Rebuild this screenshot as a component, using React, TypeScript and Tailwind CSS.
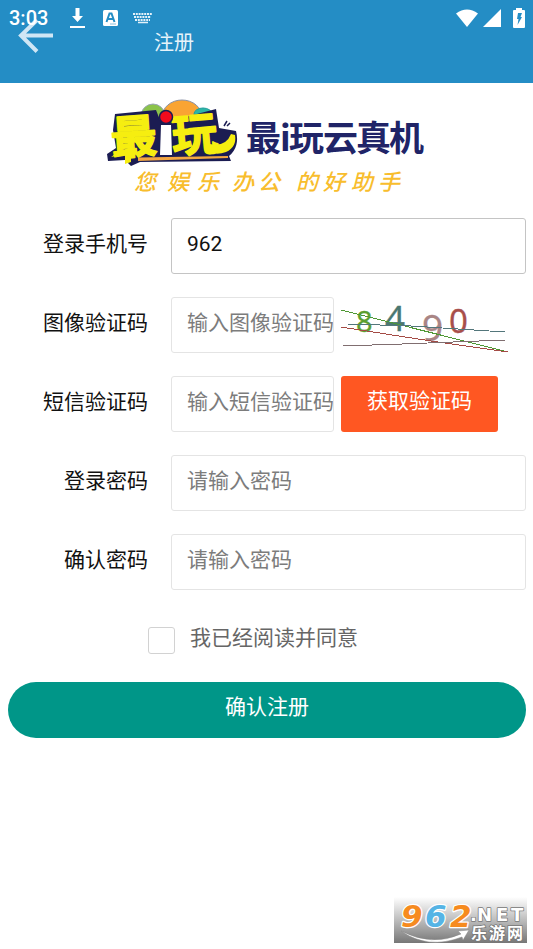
import type { ReactNode } from "react";

const inputClass =
  "h-14 min-w-0 rounded-[3px] border bg-white pl-[15px] pb-1 text-[21px] text-[#111] placeholder:text-[#7c7c7c] outline-none";

function StatusBar() {
  return (
    <div className="absolute inset-x-0 top-0 flex h-9 items-center pl-[9px] pr-2 text-white">
      <span className="w-[60px] font-[Roboto] text-[20px] font-medium leading-9">3:03</span>
      <svg className="h-[22px] w-[17px]" viewBox="0 0 17 22" fill="currentColor" aria-hidden="true">
        <path d="M6.500 1h4v8H14l-5.500 6L3 9h3.500zM1 19h15v2H1z" />
      </svg>
      <svg className="ml-4 h-4 w-4" viewBox="0 0 16 16" aria-hidden="true">
        <rect x="1" y="0" width="15" height="16" rx="1.500" fill="#fff" />
        <path d="M4.500 12L7.500 3.500h2L12.500 12M6 9h5" fill="none" stroke="#248dc5" strokeWidth="2" />
        <path d="M8 14h6" stroke="#8cc1df" />
      </svg>
      <svg className="ml-[15px] h-3 w-[19px]" viewBox="0 0 19 12" aria-hidden="true">
        <g stroke="#e4f1f9" strokeWidth="2" strokeDasharray="2 .8" fill="none">
          <path d="M0 2h19M1 5h17M2 8h15" />
          <path d="M5 10.500h10" strokeDasharray="none" strokeWidth="1.500" />
        </g>
      </svg>
      <div className="ml-auto flex items-center">
        <svg className="h-[19px] w-6" viewBox="0 0 24 19" fill="currentColor" aria-hidden="true">
          <path d="M1 4.500Q12-3.500 23 4.500L12 18z" />
        </svg>
        <svg className="ml-1 h-[19px] w-[18px]" viewBox="0 0 18 19" fill="currentColor" aria-hidden="true">
          <path d="M18 0v18H0z" />
        </svg>
        <svg className="ml-3 h-5 w-3" viewBox="0 0 12 20" aria-hidden="true">
          <path d="M3 0h6v2h2q1 0 1 1v16q0 1-1 1H1q-1 0-1-1V3q0-1 1-1h2z" fill="#fff" />
          <path d="M5 5h4L7.500 9H9l-4.500 8 1-6H4z" fill="#248dc5" />
        </svg>
      </div>
    </div>
  );
}

function Header() {
  return (
    <header className="relative flex h-[83px] items-start bg-[#248dc5]">
      <button type="button" aria-label="返回" className="ml-[17px] mt-[18px] text-[#cfe6f5]">
        <svg className="h-9 w-9" viewBox="0 0 36 36" fill="none" stroke="currentColor" strokeWidth="4">
          <path d="M36 17.500H4M20 2L4 17.500 20 33.500" />
        </svg>
      </button>
      <h1 className="ml-[101px] mt-[29px] text-[20px] leading-7 text-[#e6f3fa]">注册</h1>
      <StatusBar />
    </header>
  );
}

function Logo() {
  return (
    <svg className="mx-auto mt-3 h-[106px] w-[328px] overflow-visible" viewBox="103 95 328 106" role="img" aria-label="最i玩云真机">
      <circle cx="153" cy="116" r="12" fill="#8bc34a" stroke="#9aa5b5" />
      <ellipse cx="182" cy="117" rx="20" ry="17" fill="#f9a433" stroke="#8b93a8" />
      <ellipse cx="203" cy="114" rx="9" ry="6" fill="#2bb5a6" stroke="#1f9c9b" />
      <path d="M115 114L156 110 160 120 174 120 216 109 219 128 236 131Q240 147 229 156L231 161 140 162 131 166 125 160 108 161 107 154 116 148 113 130z" fill="#1b1c52" />
      <path d="M138 157.500L228 156 228 158 138 161z" fill="#f3a642" />
      <g className="font-['Noto_Sans_CJK_SC',sans-serif] font-bold" fill="#f6ee10" stroke="#f6ee10" strokeWidth="1.500" strokeLinejoin="round">
        <text transform="translate(112 155) rotate(-4)" fontSize="46">最</text>
        <text transform="translate(173 153) rotate(-5)" fontSize="46">玩</text>
      </g>
      <path d="M118 152l13-5v15l-6 2v-10l-14 3z" fill="#f6ee10" />
      <path d="M210 144Q226 147 231 134L235 135Q237 147 226 152Q216 156 207 151z" fill="#f6ee10" />
      <path d="M161 125H171L172 155H160z" fill="#fff" />
      <circle cx="166" cy="117" r="6.500" fill="#f20b1d" stroke="#1b1c52" strokeWidth="1.500" />
      <path d="M224 126l3-5M227 126l3-3" stroke="#1b1c52" strokeWidth="1.500" />
      <text x="246 280 289 323 356 389" y="151" fontSize="35" fill="#202467" className="font-['Noto_Sans_CJK_SC',sans-serif] font-bold">最i玩云真机</text>
      <g fontSize="22" fill="#f8bd2d" className="font-['Noto_Sans_CJK_SC',sans-serif] font-medium italic">
        <text x="134 167 197" y="190">您娱乐</text>
        <text x="232 258" y="190">办公</text>
        <text x="296 323 351 378" y="190">的好助手</text>
      </g>
    </svg>
  );
}

function Captcha() {
  return (
    <svg className="h-14 w-[168px] shrink-0 overflow-visible" viewBox="341 297 168 56" role="img" aria-label="8490">
      <g className="font-['Noto_Sans',sans-serif]" strokeWidth=".3">
        <text x="356" y="332" fontSize="29" fill="#5b9f2f" stroke="#5b9f2f">8</text>
        <text x="385" y="331" fontSize="35" fill="#4b7771" stroke="#4b7771">4</text>
        <text x="422" y="341" fontSize="37" fill="#a98585" stroke="#a98585">9</text>
        <text x="449" y="333" fontSize="33" fill="#a84f4b" stroke="#a84f4b">0</text>
      </g>
      <g fill="none" shapeRendering="crispEdges">
        <path d="M341 310L508 352" stroke="#4f9834" />
        <path d="M341 327L431 341 508 352" stroke="#a44b45" />
        <path d="M348 324L411 326 505 332" stroke="#53767b" />
        <path d="M343 346L402 344 505 340" stroke="#806e70" />
      </g>
    </svg>
  );
}

function FieldRow({ id, label, children }: { id: string; label: string; children: ReactNode }) {
  return (
    <div className="flex items-center">
      <label htmlFor={id} className="w-[148px] shrink-0 pb-1 text-right text-[21px] leading-8 text-[#111]">{label}</label>
      <div className="ml-[23px] flex min-w-0 flex-1 gap-[7px]">{children}</div>
    </div>
  );
}

function Watermark() {
  return (
    <footer className="mb-1.5 mr-1.5 mt-auto self-end">
      <svg className="h-[46px] w-[133px] overflow-visible" viewBox="394 897 133 46" role="img" aria-label="962.NET 乐游网">
        <defs>
          <linearGradient id="plate" x1="0" y1="0" x2="0" y2="1">
            <stop offset="0" stopColor="#fff" />
            <stop offset=".5" stopColor="#bdbdbd" />
            <stop offset="1" stopColor="#777" />
          </linearGradient>
        </defs>
        <path d="M394 897h133v46H394z" fill="url(#plate)" />
        <g strokeLinejoin="round" paintOrder="stroke" className="font-['DejaVu_Sans',sans-serif] font-bold">
          <g fontSize="31" stroke="#fff" strokeWidth="2.500" fontStyle="italic">
            <text x="401" y="927" fill="#f68b1f">9</text>
            <text x="425" y="927" fill="#55b4e5">6</text>
            <text x="450" y="927" fill="#f68b1f">2</text>
          </g>
          <text x="470 477 496 511" y="921" fontSize="18" fill="#fff" stroke="#777" strokeWidth="1.500">.NET</text>
        </g>
        <path d="M401 931Q432 947 461 934L458 931 469 930 463 940 462 937Q428 950 401 931z" fill="#fff" stroke="#888" strokeWidth=".5" />
        <text x="471 489 507" y="939" fontSize="16" fill="#fff" stroke="#777" strokeWidth="1.500" paintOrder="stroke" className="font-['Noto_Sans_CJK_SC',sans-serif] font-bold">乐游网</text>
      </svg>
    </footer>
  );
}

export default function App() {
  return (
    <div className="flex min-h-screen flex-col bg-white font-['Roboto','Noto_Sans_CJK_SC',sans-serif]">
      <Header />
      <main>
        <Logo />
        <form className="flex flex-col" onSubmit={(event) => event.preventDefault()}>
          <div className="mt-[17px] flex flex-col gap-[23px] pr-[7px]">
            <FieldRow id="phone" label="登录手机号">
              <input id="phone" type="tel" defaultValue="962" className={`${inputClass} flex-1 border-[#c4c4c4]`} />
            </FieldRow>
            <FieldRow id="captcha" label="图像验证码">
              <input id="captcha" placeholder="输入图像验证码" className={`${inputClass} w-[163px] border-[#e4e4e4]`} />
              <Captcha />
            </FieldRow>
            <FieldRow id="sms" label="短信验证码">
              <input id="sms" placeholder="输入短信验证码" className={`${inputClass} w-[163px] border-[#e4e4e4]`} />
              <button type="button" className="h-14 w-[157px] shrink-0 rounded-[3px] bg-[#ff5722] pb-1 text-[21px] text-white">获取验证码</button>
            </FieldRow>
            <FieldRow id="password" label="登录密码">
              <input id="password" type="password" placeholder="请输入密码" className={`${inputClass} flex-1 border-[#e4e4e4]`} />
            </FieldRow>
            <FieldRow id="confirm" label="确认密码">
              <input id="confirm" type="password" placeholder="请输入密码" className={`${inputClass} flex-1 border-[#e4e4e4]`} />
            </FieldRow>
          </div>
          <label className="ml-[148px] mt-8 flex items-center gap-[15px] self-start text-[21px] leading-8 text-[#666]">
            <input type="checkbox" className="mt-1 h-[27px] w-[27px] appearance-none rounded-[3px] border border-[#d2d2d2] bg-white checked:bg-[#009688]" />
            我已经阅读并同意
          </label>
          <button type="submit" className="ml-2 mr-[7px] mt-7 h-14 rounded-full bg-[#009688] pb-1 text-[21px] text-white">确认注册</button>
        </form>
      </main>
      <Watermark />
    </div>
  );
}
